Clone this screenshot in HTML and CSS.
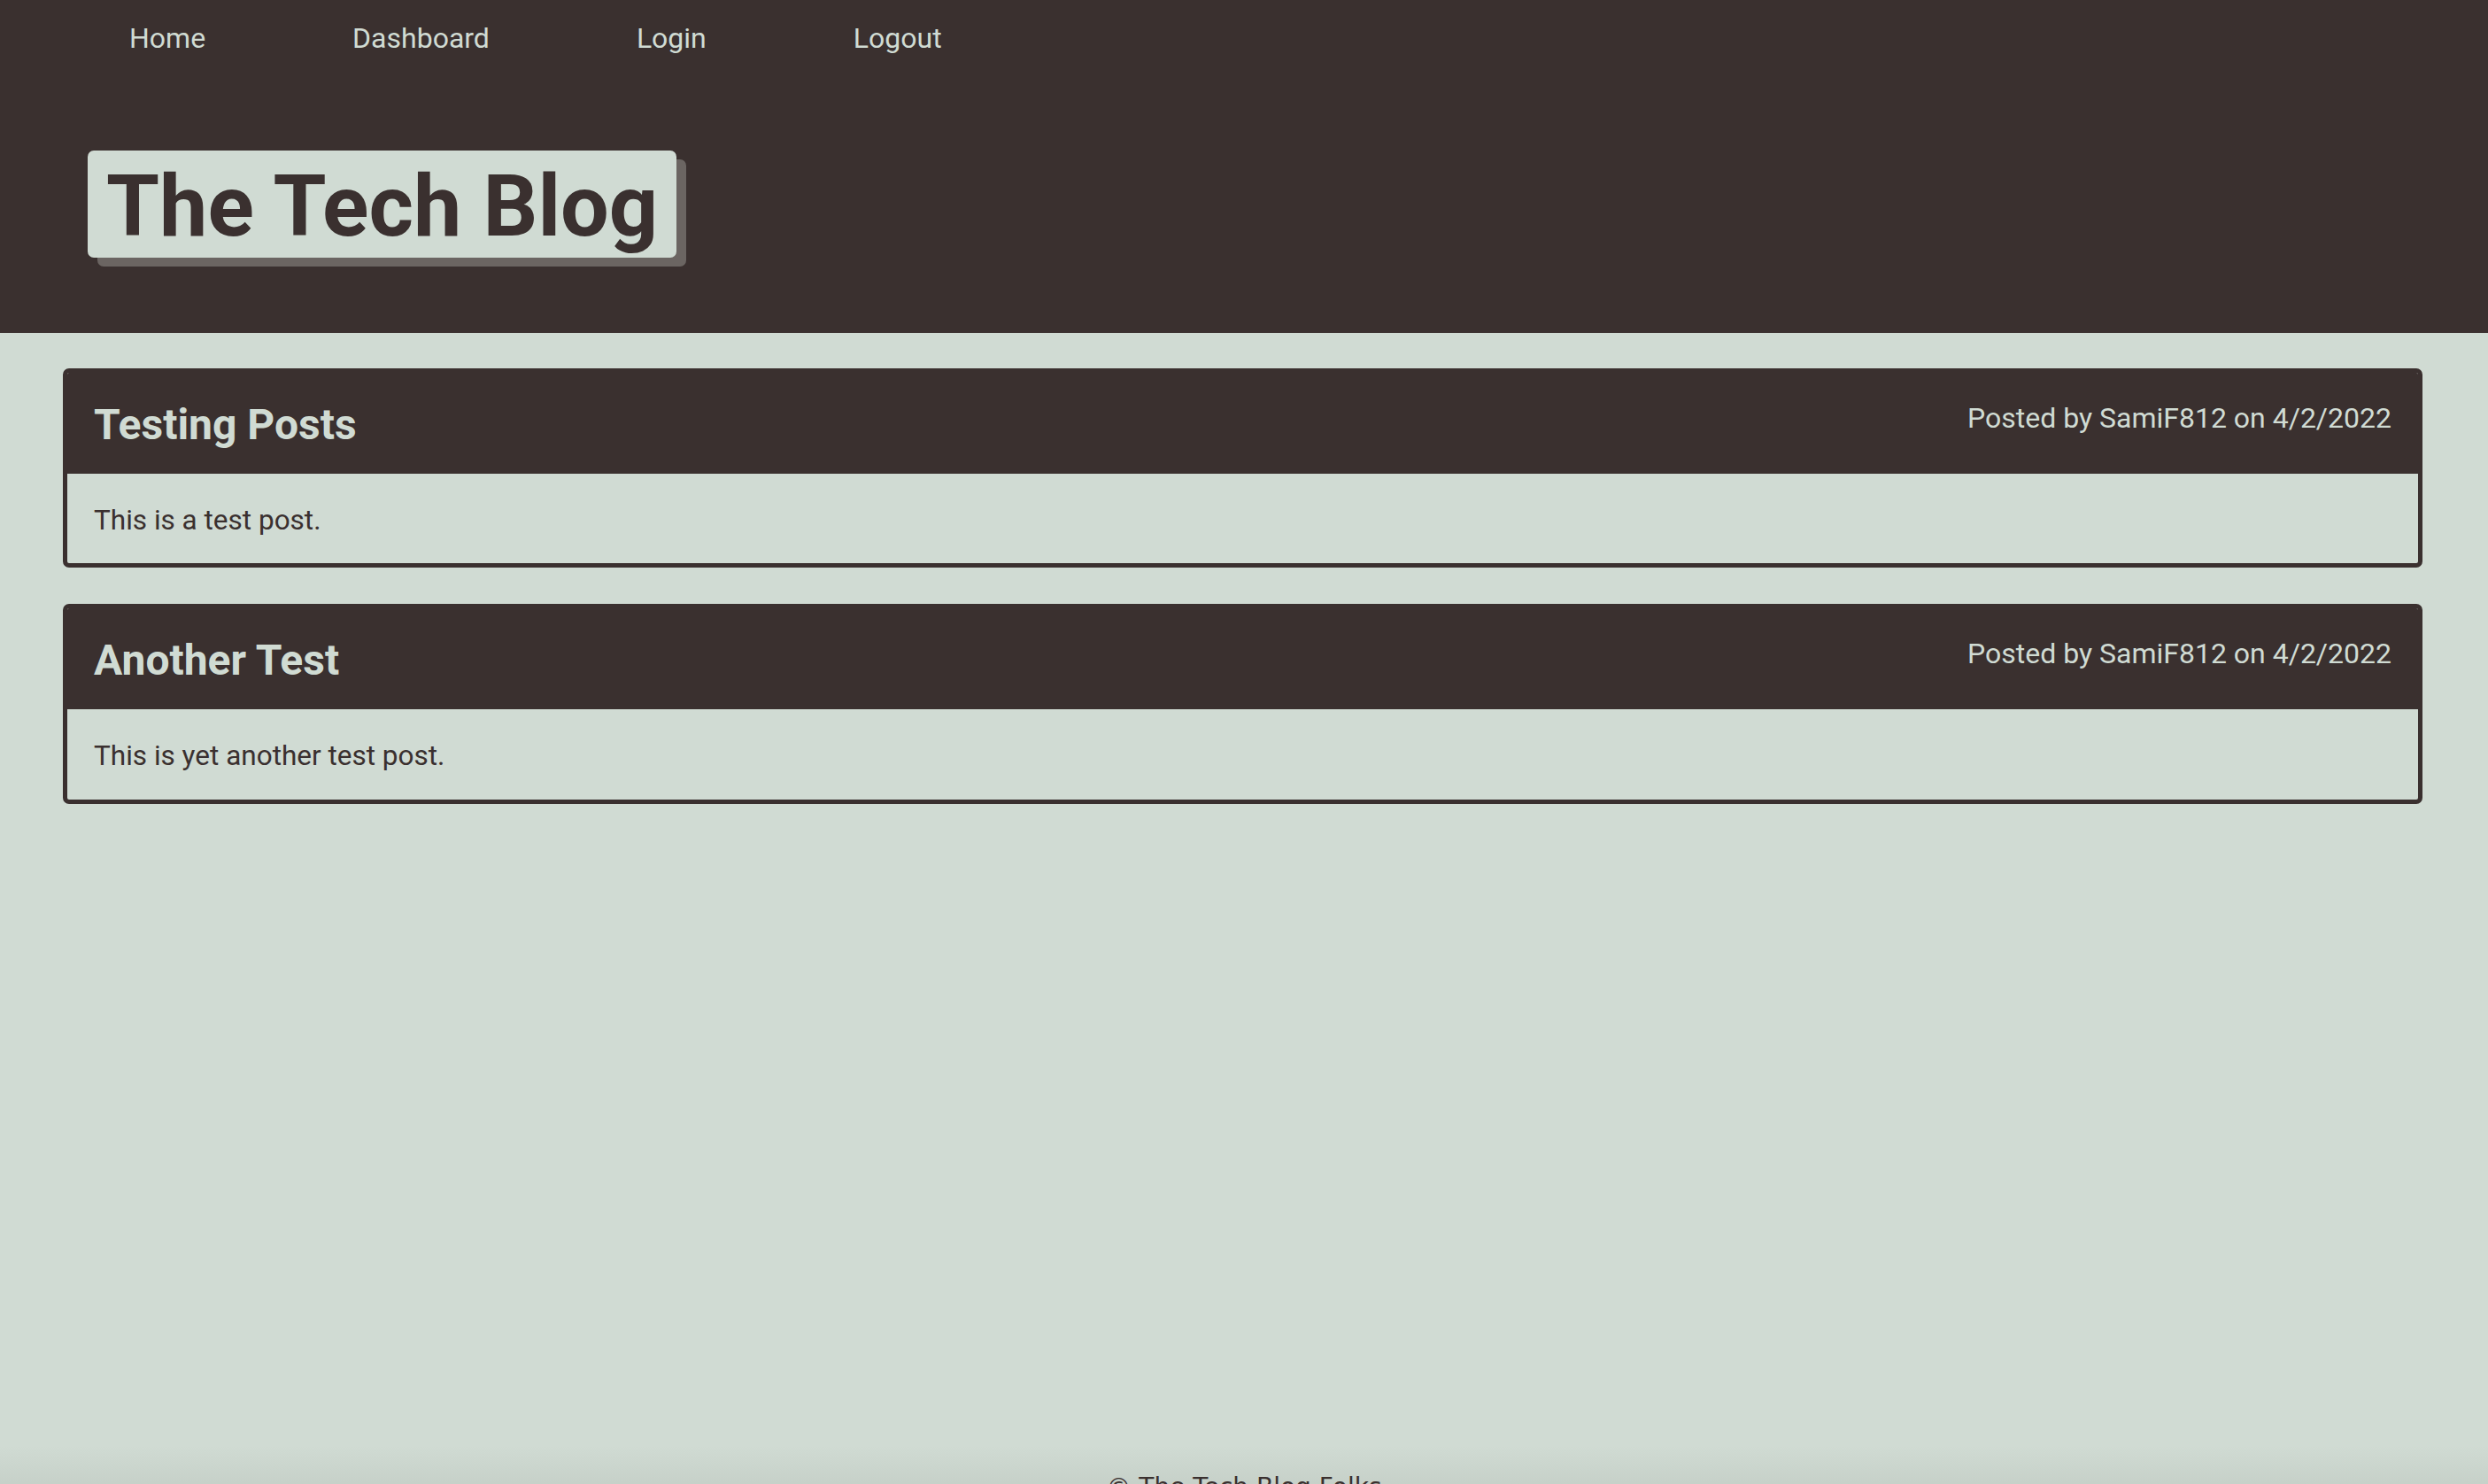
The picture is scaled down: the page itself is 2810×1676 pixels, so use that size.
FILE: index.html
```html
<!DOCTYPE html>
<html lang="en">
<head>
    <meta charset="UTF-8">
    <meta name="viewport" content="width=device-width, initial-scale=1.0">
    <title>The Tech Blog</title>
    <link rel="stylesheet" href="styles.css">
</head>
<body>
    <header class="topo">
        <nav class="menu">
            <a href="#">Home</a>
            <a href="#">Dashboard</a>
            <a href="#">Login</a>
            <a href="#">Logout</a>
        </nav>
        <h1 class="logo">The Tech Blog</h1>
    </header>

    <main class="posts">
        <article class="post">
            <div class="post-topo">
                <h2>Testing Posts</h2>
                <p class="autor">Posted by SamiF812 on 4/2/2022</p>
            </div>
            <div class="post-corpo">
                <p>This is a test post.</p>
            </div>
        </article>

        <article class="post">
            <div class="post-topo">
                <h2>Another Test</h2>
                <p class="autor">Posted by SamiF812 on 4/2/2022</p>
            </div>
            <div class="post-corpo">
                <p>This is yet another test post.</p>
            </div>
        </article>
    </main>

    <footer class="rodape">
        <p>&copy; The Tech Blog Folks</p>
    </footer>
</body>
</html>
```

FILE: styles.css
```css
body {
    margin: 0;
    font-family: Roboto, "Liberation Sans", sans-serif;
    background-color: #d0dbd3;
    color: #3a302f;
}
p, h1, h2 {
    margin: 0;
}
.topo {
    background-color: #3a302f;
    height: 376px;
    box-sizing: border-box;
    padding-top: 24px;
}
.menu {
    display: flex;
    gap: 166px;
    padding-left: 146px;
}
.menu a {
    color: #d0dbd3;
    text-decoration: none;
    font-size: 32px;
    line-height: 1.2;
}
.logo {
    display: inline-block;
    margin: 108px 0 0 99px;
    padding: 15px 21px 9px 21px;
    font-size: 97px;
    line-height: 1;
    font-weight: 700;
    color: #3a302f;
    background-color: #d0dbd3;
    border-radius: 7px;
    box-shadow: 11px 10px 0 #6b6562;
}
.posts {
    min-height: 75vh;
    box-sizing: border-box;
    padding: 40px 74px 0 71px;
    display: flex;
    flex-direction: column;
    gap: 41px;
}
.post {
    border: 5px solid #3a302f;
    border-radius: 7px;
    overflow: hidden;
}
.post-topo {
    display: flex;
    justify-content: space-between;
    align-items: flex-start;
    background-color: #3a302f;
    color: #d0dbd3;
    padding: 30px 30px 26px 30px;
}
.post-topo h2 {
    font-size: 48px;
    line-height: 1.2;
    font-weight: 700;
}
.autor {
    font-size: 32px;
    line-height: 1.2;
    margin-top: 2px;
}
.post-corpo {
    padding: 34px 30px 30px 30px;
    font-size: 31.5px;
    line-height: 1.2;
}
.rodape {
    text-align: center;
    padding: 30px 0 40px;
    font-family: "DejaVu Sans", sans-serif;
    font-size: 28px;
    background: linear-gradient(#d0dbd3, #c5cfc7 50px);
}
```
